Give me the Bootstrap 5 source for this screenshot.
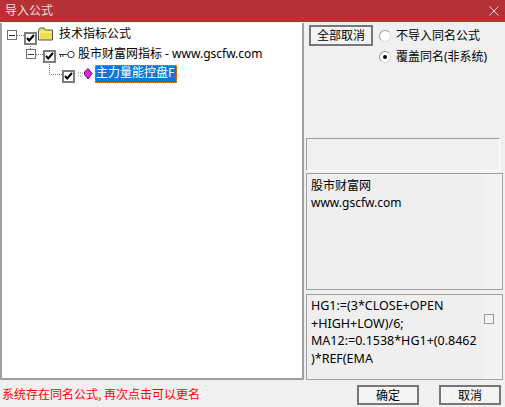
<!DOCTYPE html>
<html lang="zh"><head><meta charset="utf-8">
<link href="https://cdn.jsdelivr.net/npm/bootstrap@5.3.0/dist/css/bootstrap.min.css" rel="stylesheet">
<style>
html,body{margin:0;height:407px;overflow:hidden;background:#f0f0f0}
body,.btn{font-family:"Noto Sans","Noto Sans CJK SC",sans-serif;font-size:12px;line-height:16px;color:#000}
.dlgroot{width:505px;height:407px}
.titlebar{height:22px;background:#b43236;color:#f3dcdc;padding:0 5px}
.closex{margin-right:1px}
.mainrow{height:358px;padding:1px 2px 0 0}
.treepane{width:304px;background:#fff;border:2px solid #a0a0a0;border-width:0 2px 2px 2px;position:relative}
.treeline{position:absolute;left:0;top:0}
.treerow{height:20px;position:relative}
.r1{padding-left:5px;height:21px}.r2{padding-left:24px}.r3{padding-left:60px}
.expander{width:10px;height:10px;border:1px solid #707070;flex:none;background:#fff;position:relative;margin-right:7px}
.r1 .expander{margin-top:3px}
.expander::after{content:"";position:absolute;left:1px;right:1px;top:3.5px;height:1px;background:#333}
.tick{width:13px;height:13px;border:2px solid #7c7c7c;flex:none;background:#fff;margin-right:1px;margin-top:4px;display:flex;align-items:center;justify-content:center}
.r1 .tick{margin-top:9px}
.foldicon{margin-right:5px;flex:none}
.keyicon{margin:0 3px 0 2px;flex:none}
.itemicon{margin:0 0 0 2px;flex:none}
.selname{background:#0a78d7;color:#fff;outline:1px dotted #e08a20;outline-offset:-1px;padding:0 1px;width:82px;height:18px;overflow:hidden;white-space:nowrap;margin-left:2px}
.rightpane{width:199px;padding:2px 0 0 2px;min-width:0}
.topctl{height:113px;padding:0 0 0 3px}
.pushbtn{width:64px;height:21px;padding:0;background:#f3f3f3;border:2px solid #777;border-radius:0;color:#000;line-height:16px}
.pushbtn:hover{background:#f3f3f3;border-color:#777;color:#000}
.radiocol{padding-left:6px;padding-top:1px;gap:2px}
.radrow{height:19px}
.radcirc{width:12px;height:12px;border-radius:50%;background:#fff;border:1px solid #9a9a9a;border-right-color:#ddd;border-bottom-color:#ddd;margin-right:5px;flex:none;position:relative}
.radcirc.onn::after{content:"";position:absolute;left:3px;top:3px;width:4px;height:4px;border-radius:50%;background:#000}
.stat{height:33px;width:194px;border:1px solid #a0a0a0;border-bottom-color:#fff;border-right-color:#fff;margin-bottom:2px}
.memo{border:1px solid #a0a0a0;width:197px;padding:2px 4px;background:linear-gradient(90deg,#efeff0 177px,#f3f3f1 177px)}
.memotop{height:118px;margin-bottom:4px;line-height:17px;padding-top:3px}
.memobot{height:86px;line-height:17.5px;position:relative;padding:2px 4px 0 4px;font-size:12.5px}
.memobot div{width:180px;white-space:nowrap}
.tinybox{position:absolute;right:8px;top:19px;width:10px;height:10px;border:1px solid #9a9a9a;background:#f4f4f4}
.footrow{height:27px}
.warn{color:#f00;padding-left:2px;padding-top:6px;font-family:"Noto Sans CJK SC",sans-serif}
.footbtns{gap:20px;padding:5px 4px 0 0}
.dlgbtn{width:62px;height:20px;padding:0;background:#f4f4f4;border:2px solid #777;border-radius:0;color:#000;line-height:15px}
.dlgbtn:hover{background:#f4f4f4;border-color:#777;color:#000}
</style></head><body>
<div class="dlgroot d-flex flex-column">
 <div class="titlebar d-flex align-items-center justify-content-between">
  <span>导入公式</span>
  <svg class="closex" width="10" height="10" viewBox="0 0 10 10"><path d="M0.5 .5L9.5 9.5M9.5 .5L.5 9.5" stroke="#f0d8d8" fill="none"/></svg>
 </div>
 <div class="mainrow d-flex">
  <div class="treepane">
   <svg class="treeline" width="80" height="70"><path d="M15 12.5H22M28.5 21V27M34 31.5H41M47.5 39V51.5H60" stroke="#777" stroke-dasharray="1 1" fill="none"/></svg>
   <div class="treerow r1 d-flex align-items-center">
    <span class="expander"></span><span class="tick"><svg width="9" height="8" viewBox="0 0 9 8"><path d="M1 4L3.2 6.5L8 1" stroke="#000" stroke-width="2" fill="none"/></svg></span>
    <svg width="16" height="14" viewBox="0 0 16 14" class="foldicon"><path d="M.5 13V3L2 1H6L7.5 3H14.5V13Z" fill="#eee04a" stroke="#555"/><path d="M1.5 12V5H14" stroke="#fbf8b0" fill="none"/></svg>
    <span>技术指标公式</span>
   </div>
   <div class="treerow r2 d-flex align-items-center">
    <span class="expander"></span><span class="tick"><svg width="9" height="8" viewBox="0 0 9 8"><path d="M1 4L3.2 6.5L8 1" stroke="#000" stroke-width="2" fill="none"/></svg></span>
    <svg width="16" height="9" viewBox="0 0 16 9" class="keyicon"><circle cx="12" cy="4.5" r="3.2" fill="#fff" stroke="#333"/><path d="M0 4.5H9M1.5 4.5V7M4 4.5V7" stroke="#333" fill="none"/></svg>
    <span>股市财富网指标 - www.gscfw.com</span>
   </div>
   <div class="treerow r3 d-flex align-items-center">
    <span class="tick"><svg width="9" height="8" viewBox="0 0 9 8"><path d="M1 4L3.2 6.5L8 1" stroke="#000" stroke-width="2" fill="none"/></svg></span>
    <svg width="15" height="12" viewBox="0 0 15 12" class="itemicon"><path d="M0 5H6M0 8H6" stroke="#888" stroke-dasharray="1 1"/><path d="M10 .5L14 5.5L10 11L6.5 6.5V4Z" fill="#f020e0" stroke="#501060"/></svg>
    <span class="selname">主力量能控盘F</span>
   </div>
  </div>
  <div class="rightpane d-flex flex-column">
   <div class="topctl d-flex">
    <button class="btn pushbtn" type="button">全部取消</button>
    <div class="radiocol d-flex flex-column">
     <div class="radrow d-flex align-items-center"><span class="radcirc"></span>不导入同名公式</div>
     <div class="radrow d-flex align-items-center"><span class="radcirc onn"></span>覆盖同名(非系统)</div>
    </div>
   </div>
   <div class="stat"></div>
   <div class="memo memotop">股市财富网<br>www.gscfw.com</div>
   <div class="memo memobot"><div>HG1:=(3*CLOSE+OPEN<br>+HIGH+LOW)/6;<br>MA12:=0.1538*HG1+(0.8462<br>)*REF(EMA</div><span class="tinybox"></span></div>
  </div>
 </div>
 <div class="footrow d-flex justify-content-between">
  <div class="warn">系统存在同名公式, 再次点击可以更名</div>
  <div class="footbtns d-flex">
   <button class="btn dlgbtn" type="button">确定</button>
   <button class="btn dlgbtn" type="button">取消</button>
  </div>
 </div>
</div>
<script src="https://cdn.jsdelivr.net/npm/bootstrap@5.3.0/dist/js/bootstrap.bundle.min.js"></script>
</body></html>
